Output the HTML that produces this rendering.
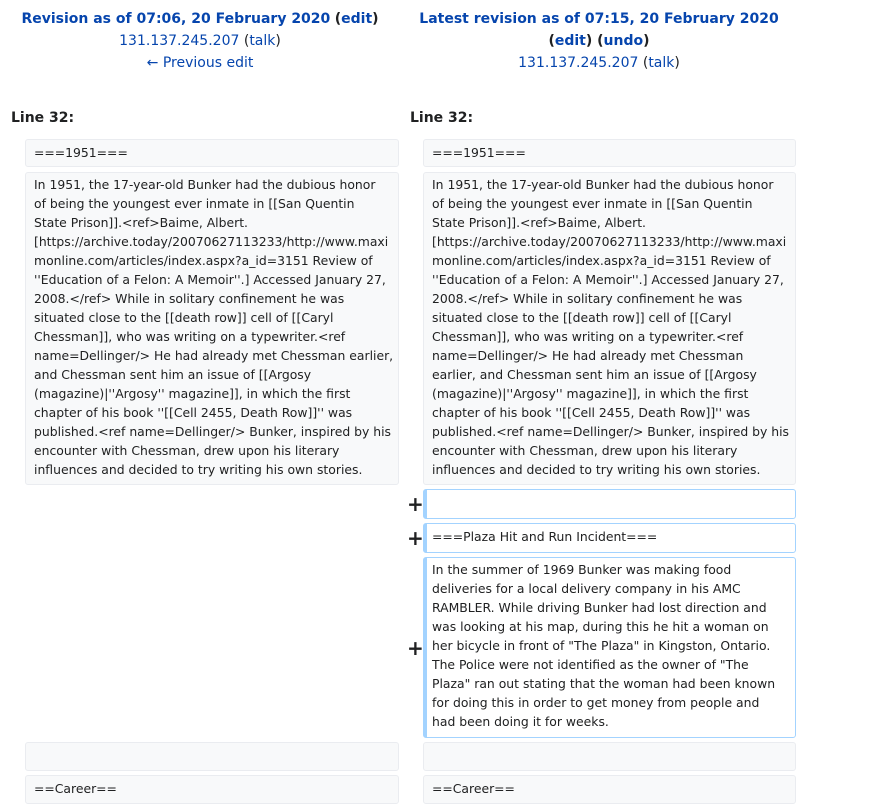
<!DOCTYPE html>
<html><head><meta charset="utf-8"><style>
body{margin:0;background:#fff;font-family:"DejaVu Sans","Liberation Sans",sans-serif;color:#202122;width:874px;height:808px;position:relative;overflow:hidden}
a{color:#0645ad;text-decoration:none}
.h{position:absolute;text-align:center;font-size:14px;line-height:22px}
.h b{font-weight:bold}
.ln{position:absolute;font-weight:bold;font-size:14px}
.bx{position:absolute;box-sizing:border-box;background:#f8f9fa;border:1px solid #eaecf0;border-radius:3px;font-size:12.4px;line-height:19px;padding:1px 0 0 8px;white-space:nowrap;color:#202122}
.ad{background:#fff;border:1px solid #a3d3ff;border-left:4px solid #a3d3ff;padding-left:5px}
.pl{position:absolute;font-size:20px;font-weight:bold;left:407px;line-height:20px}
</style></head><body>
<div class="h" style="left:0;width:400px;top:8px"><a href="#"><b>Revision as of 07:06, 20 February 2020</b></a> <b>(<a href="#">edit</a>)</b><br><a href="#">131.137.245.207</a> (<a href="#">talk</a>)<br><a href="#">← Previous edit</a></div>
<div class="h" style="left:398px;width:402px;top:8px"><a href="#"><b>Latest revision as of 07:15, 20 February 2020</b></a><br><b>(<a href="#">edit</a>) (<a href="#">undo</a>)</b><br><a href="#">131.137.245.207</a> (<a href="#">talk</a>)</div>
<div class="ln" style="left:11px;top:110px">Line 32:</div>
<div class="ln" style="left:410px;top:110px">Line 32:</div>

<div class="bx" style="left:25px;top:139px;width:374px;height:28px;padding-top:3px">===1951===</div>
<div class="bx" style="left:423px;top:139px;width:373px;height:28px;padding-top:3px">===1951===</div>

<div class="bx" style="left:25px;top:172px;width:374px;height:313px;padding-top:2px">In 1951, the 17-year-old Bunker had the dubious honor<br>of being the youngest ever inmate in [[San Quentin<br>State Prison]].&lt;ref&gt;Baime, Albert.<br>[https://archive.today/20070627113233/http://www.maxi<br>monline.com/articles/index.aspx?a_id=3151 Review of<br>''Education of a Felon: A Memoir''.] Accessed January 27,<br>2008.&lt;/ref&gt; While in solitary confinement he was<br>situated close to the [[death row]] cell of [[Caryl<br>Chessman]], who was writing on a typewriter.&lt;ref<br>name=Dellinger/&gt; He had already met Chessman earlier,<br>and Chessman sent him an issue of [[Argosy<br>(magazine)|''Argosy'' magazine]], in which the first<br>chapter of his book ''[[Cell 2455, Death Row]]'' was<br>published.&lt;ref name=Dellinger/&gt; Bunker, inspired by his<br>encounter with Chessman, drew upon his literary<br>influences and decided to try writing his own stories.</div>
<div class="bx" style="left:423px;top:172px;width:373px;height:313px;padding-top:2px">In 1951, the 17-year-old Bunker had the dubious honor<br>of being the youngest ever inmate in [[San Quentin<br>State Prison]].&lt;ref&gt;Baime, Albert.<br>[https://archive.today/20070627113233/http://www.maxi<br>monline.com/articles/index.aspx?a_id=3151 Review of<br>''Education of a Felon: A Memoir''.] Accessed January 27,<br>2008.&lt;/ref&gt; While in solitary confinement he was<br>situated close to the [[death row]] cell of [[Caryl<br>Chessman]], who was writing on a typewriter.&lt;ref<br>name=Dellinger/&gt; He had already met Chessman<br>earlier, and Chessman sent him an issue of [[Argosy<br>(magazine)|''Argosy'' magazine]], in which the first<br>chapter of his book ''[[Cell 2455, Death Row]]'' was<br>published.&lt;ref name=Dellinger/&gt; Bunker, inspired by his<br>encounter with Chessman, drew upon his literary<br>influences and decided to try writing his own stories.</div>

<div class="pl" style="top:494px">+</div>
<div class="bx ad" style="left:423px;top:489px;width:373px;height:30px"></div>
<div class="pl" style="top:528px">+</div>
<div class="bx ad" style="left:423px;top:523px;width:373px;height:30px;padding-top:3px">===Plaza Hit and Run Incident===</div>
<div class="pl" style="top:638px">+</div>
<div class="bx ad" style="left:423px;top:557px;width:373px;height:181px;padding-top:2px">In the summer of 1969 Bunker was making food<br>deliveries for a local delivery company in his AMC<br>RAMBLER. While driving Bunker had lost direction and<br>was looking at his map, during this he hit a woman on<br>her bicycle in front of "The Plaza" in Kingston, Ontario.<br>The Police were not identified as the owner of "The<br>Plaza" ran out stating that the woman had been known<br>for doing this in order to get money from people and<br>had been doing it for weeks.</div>

<div class="bx" style="left:25px;top:742px;width:374px;height:29px"></div>
<div class="bx" style="left:423px;top:742px;width:373px;height:29px"></div>
<div class="bx" style="left:25px;top:775px;width:374px;height:29px;padding-top:3px">==Career==</div>
<div class="bx" style="left:423px;top:775px;width:373px;height:29px;padding-top:3px">==Career==</div>
</body></html>
